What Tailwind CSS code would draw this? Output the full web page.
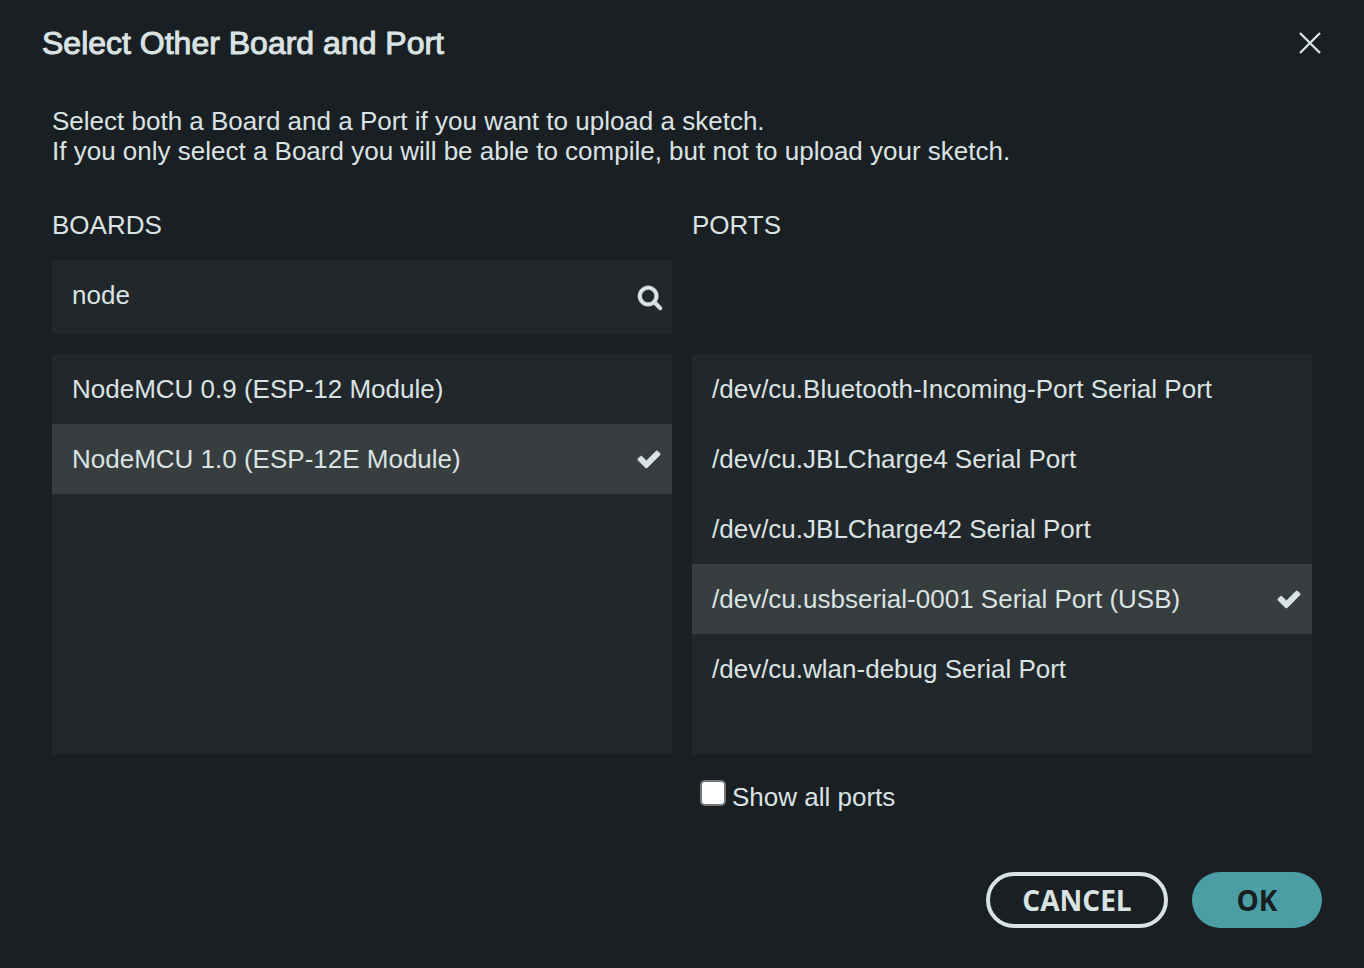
<!DOCTYPE html>
<html lang="en">
<head>
<meta charset="utf-8">
<meta name="viewport" content="width=device-width, initial-scale=1">
<title>Select Other Board and Port</title>
<script src="https://cdn.jsdelivr.net/npm/@tailwindcss/browser@4"></script>
</head>
<body class="min-h-screen bg-[#1a1f23] text-[#dae3e3] font-['Liberation_Sans',Arial,sans-serif] text-[26px] leading-[30px]">
<svg class="hidden" aria-hidden="true">
  <symbol id="check" viewBox="0 0 1792 1792"><path d="M1671 566q0 40-28 68l-724 724-136 136q-28 28-68 28t-68-28l-136-136-362-362q-28-28-28-68t28-68l136-136q28-28 68-28t68 28l294 295 656-657q28-28 68-28t68 28l136 136q28 28 28 68z"/></symbol>
</svg>
<main role="dialog" aria-labelledby="title" class="flex min-h-screen flex-col px-[42px] pt-6 pb-10">
  <header class="flex items-center justify-between">
    <h1 id="title" class="text-[32px] leading-[38px] [-webkit-text-stroke:1px_#dae3e3]">Select Other Board and Port</h1>
    <button type="button" aria-label="Close" class="p-px">
      <svg class="size-[22px]" viewBox="0 0 22 22" fill="none" stroke="currentColor" stroke-width="2.3"><path d="M1 1 21 21M21 1 1 21"/></svg>
    </button>
  </header>
  <div class="px-[10px] pt-11">
    <p>Select both a Board and a Port if you want to upload a sketch.<br>If you only select a Board you will be able to compile, but not to upload your sketch.</p>
    <div class="mt-11 grid grid-cols-2 gap-5">
      <section class="flex flex-col">
        <h2><label for="search">BOARDS</label></h2>
        <div class="mt-5 flex h-[74px] items-center bg-[#22272b] pr-[9px] pl-5">
          <input id="search" type="text" value="node" class="min-w-0 flex-1 bg-transparent pb-1 outline-none">
          <svg class="size-[26px] shrink-0 overflow-visible" viewBox="0 0 1792 1792" fill="currentColor" stroke="currentColor" stroke-width="30" aria-hidden="true"><path d="M1216 832q0-185-131.500-316.500t-316.500-131.500-316.500 131.500-131.500 316.500 131.500 316.500 316.500 131.500 316.500-131.500 131.500-316.500zm512 832q0 52-38 90t-90 38q-54 0-90-38l-343-342q-179 124-399 124-143 0-273.500-55.500t-225-150-150-225-55.500-273.500 55.500-273.500 150-225 225-150 273.500-55.500 273.500 55.500 225 150 150 225 55.500 273.500q0 220-124 399l343 343q37 37 37 90z"/></svg>
        </div>
        <ul class="mt-5 h-[400px] overflow-hidden bg-[#22272b]">
          <li><button type="button" class="flex h-[70px] w-full items-center px-5 text-left">NodeMCU 0.9 (ESP-12 Module)</button></li>
          <li><button type="button" aria-pressed="true" class="flex h-[70px] w-full items-center justify-between bg-[#383d40] pr-[10px] pl-5 text-left">NodeMCU 1.0 (ESP-12E Module)<svg class="size-[26px] shrink-0" fill="currentColor" stroke="currentColor" stroke-width="30" aria-hidden="true"><use href="#check"/></svg></button></li>
        </ul>
      </section>
      <section class="flex flex-col">
        <h2>PORTS</h2>
        <ul class="mt-[114px] h-[400px] overflow-hidden bg-[#22272b]">
          <li><button type="button" class="flex h-[70px] w-full items-center px-5 text-left">/dev/cu.Bluetooth-Incoming-Port Serial Port</button></li>
          <li><button type="button" class="flex h-[70px] w-full items-center px-5 text-left">/dev/cu.JBLCharge4 Serial Port</button></li>
          <li><button type="button" class="flex h-[70px] w-full items-center px-5 text-left">/dev/cu.JBLCharge42 Serial Port</button></li>
          <li><button type="button" aria-pressed="true" class="flex h-[70px] w-full items-center justify-between bg-[#383d40] pr-[10px] pl-5 text-left">/dev/cu.usbserial-0001 Serial Port (USB)<svg class="size-[26px] shrink-0" fill="currentColor" stroke="currentColor" stroke-width="30" aria-hidden="true"><use href="#check"/></svg></button></li>
          <li><button type="button" class="flex h-[70px] w-full items-center px-5 text-left">/dev/cu.wlan-debug Serial Port</button></li>
        </ul>
        <label class="mt-[26px] flex items-start gap-[6px] pl-2"><input type="checkbox" class="size-[26px] shrink-0 appearance-none rounded-[5px] border-2 border-[#767676] bg-white checked:bg-[#4a9ea4]"><span class="pt-[2px]">Show all ports</span></label>
      </section>
    </div>
  </div>
  <footer class="mt-auto flex justify-end gap-6 font-['Open_Sans',sans-serif] text-[28px] leading-7 font-bold">
    <button type="button" class="h-14 min-w-[182px] rounded-full border-4 border-[#dae3e3] px-7">CANCEL</button>
    <button type="button" class="h-14 min-w-[130px] rounded-full bg-[#4a9ea4] px-10 text-[#171e21]">OK</button>
  </footer>
</main>
</body>
</html>
